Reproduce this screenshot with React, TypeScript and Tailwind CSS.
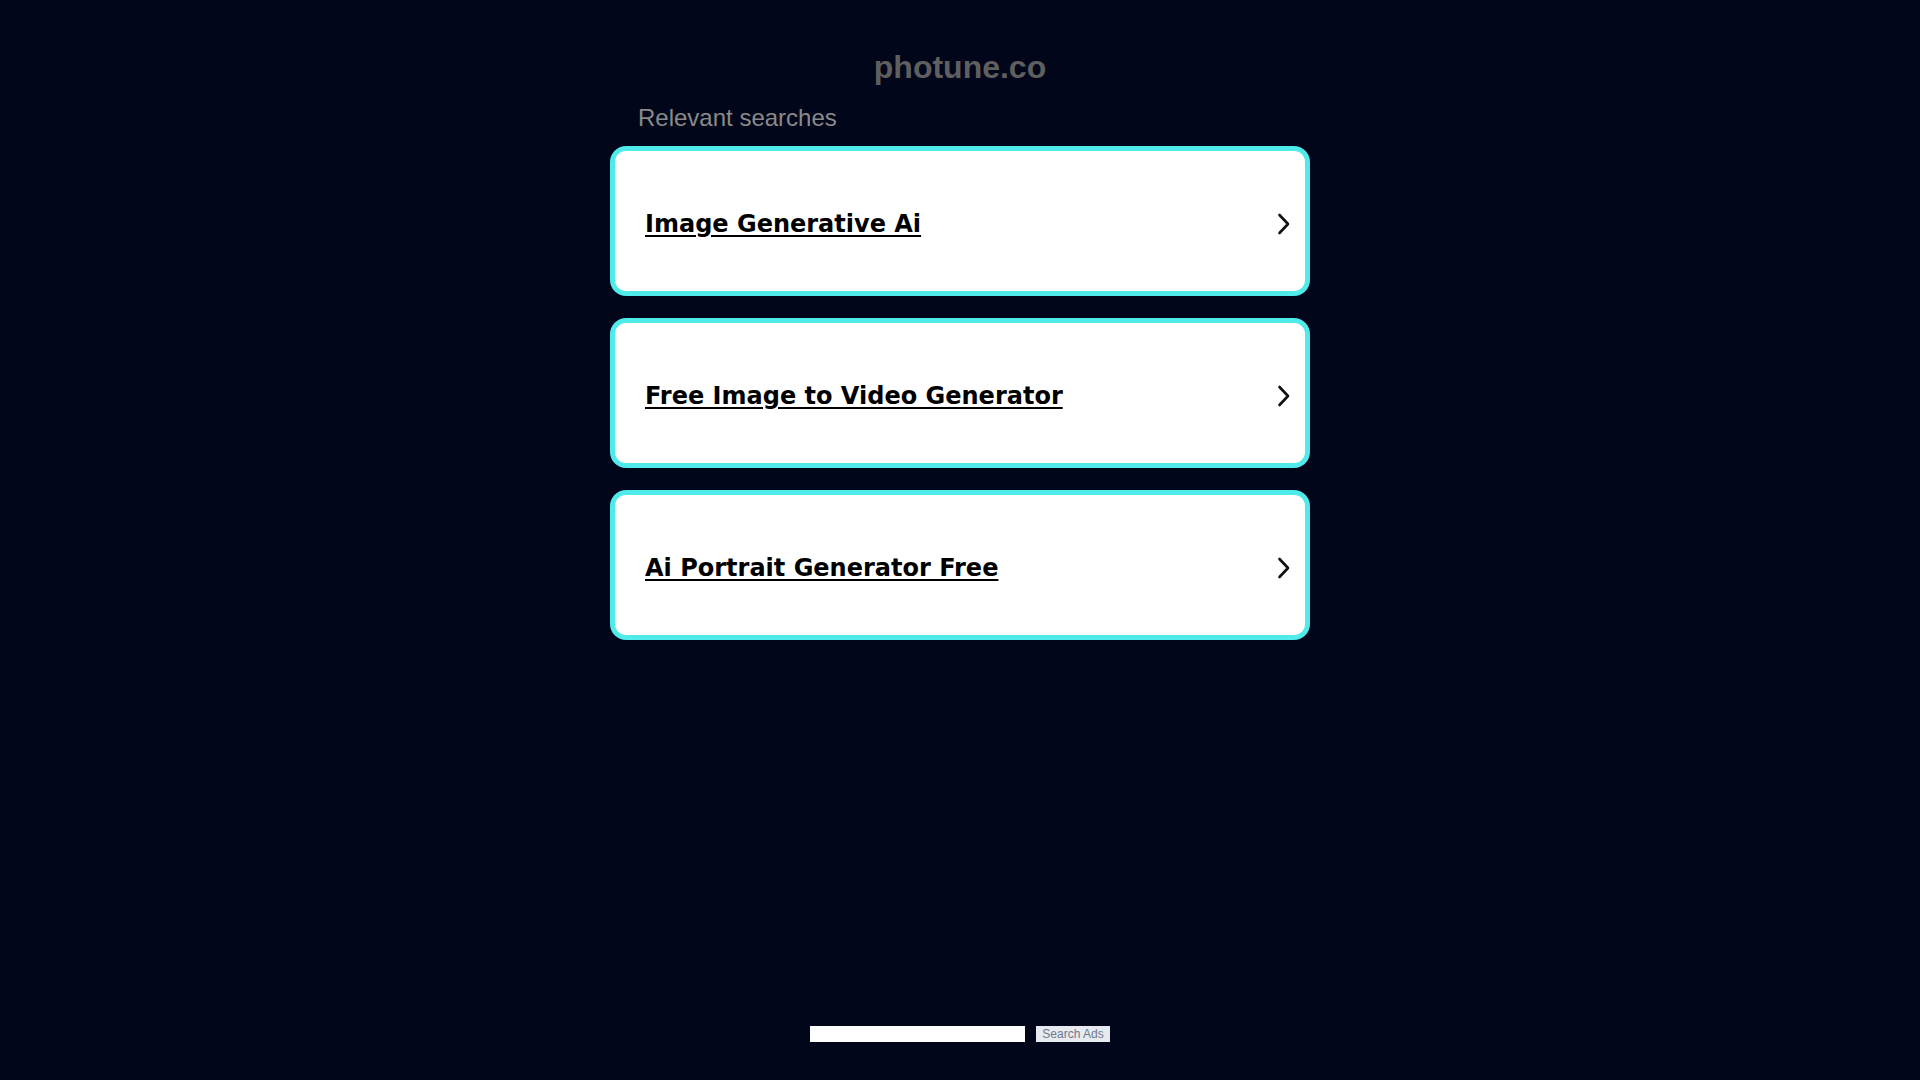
import React from 'react';

const searches = ['Image Generative Ai', 'Free Image to Video Generator', 'Ai Portrait Generator Free'];

const Chevron = () => (
  <svg width="14" height="22" viewBox="0 0 14 22" fill="none">
    <polyline points="2.5,2 11,11 2.5,20" stroke="#111" strokeWidth="2.6" strokeLinecap="round" strokeLinejoin="round" />
  </svg>
);

const SearchCard: React.FC<{ label: string }> = ({ label }) => (
  <a
    href="#"
    className="flex h-[150px] items-center justify-between rounded-[16px] border-[5px] border-[#4febeb] bg-white pt-[5px] pl-[30px] pr-[14px]"
  >
    <span
      className="text-[24px] font-bold text-black underline decoration-2 underline-offset-[3px]"
      style={{ fontFamily: '"DejaVu Sans", Verdana, sans-serif' }}
    >
      {label}
    </span>
    <Chevron />
  </a>
);

export default function App() {
  return (
    <div
      className="flex h-screen flex-col bg-[#01061b]"
      style={{ fontFamily: '"Liberation Sans", Arial, sans-serif' }}
    >
      <div className="mx-auto w-[700px] pt-[49px]">
        <h1 className="text-center text-[32px] font-bold leading-[37px] text-[#5f5f5f]">photune.co</h1>
        <div className="mt-[18px] mb-[14px] pl-[28px] text-[24px] leading-[28px] text-[#8a8a8a]">
          Relevant searches
        </div>
        <div className="flex flex-col gap-[22px]">
          {searches.map((s) => (
            <SearchCard key={s} label={s} />
          ))}
        </div>
      </div>

      <div className="mt-auto flex items-center justify-center gap-[11px] pb-[38px]">
        <input type="text" className="h-[16px] w-[215px] border-0 bg-white outline-none" />
        <button className="h-[16px] w-[74px] bg-[#e7eaf0] text-[12px] leading-[16px] text-[#6d7b8a]">
          Search Ads
        </button>
      </div>
    </div>
  );
}
